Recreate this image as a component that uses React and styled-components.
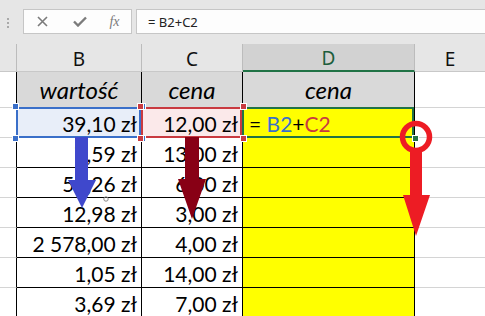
import React from 'react'
import styled, { createGlobalStyle } from 'styled-components'

const GlobalStyle = createGlobalStyle`
  html, body { margin: 0; padding: 0; background: #fff; }
  body { font-family: 'Lato', 'Noto Sans', sans-serif; }
`

const Window = styled.div`
  position: relative;
  width: 485px;
  height: 316px;
  overflow: hidden;
  background: #fff;
`

const Toolbar = styled.div`
  display: flex;
  align-items: flex-start;
  height: 44px;
  padding-top: 9px;
  box-sizing: border-box;
  background: #e6e6e6;
`

const Grip = styled.div`
  display: flex;
  flex-direction: column;
  gap: 2px;
  margin: 9px 14px 0 7px;
  span {
    width: 2px;
    height: 2px;
    background: #a9a9a9;
  }
`

const ButtonBox = styled.div`
  display: grid;
  grid-template-columns: 37px 37px 33px;
  align-items: center;
  justify-items: center;
  width: 109px;
  height: 25px;
  box-sizing: border-box;
  border: 1px solid #c6c6c6;
  background: #fdfdfd;
  color: #7b7b7b;
`

const Fx = styled.span`
  font-family: 'Liberation Serif', serif;
  font-style: italic;
  font-size: 14px;
  color: #7b7b7b;
`

const FormulaBox = styled.div`
  flex: 1;
  height: 25px;
  margin-left: 4px;
  padding-left: 11px;
  box-sizing: border-box;
  border: 1px solid #c6c6c6;
  border-right: none;
  background: #fdfdfd;
  display: flex;
  align-items: center;
  font-family: 'Noto Sans', sans-serif;
  font-size: 13px;
  color: #222;
`

const Sheet = styled.div`
  display: grid;
  grid-template-columns: 17px 125px 101px 172px 70px;
  grid-template-rows: 28px 36px repeat(7, 30px);
`

const ColHead = styled.div`
  display: flex;
  align-items: center;
  justify-content: center;
  box-sizing: border-box;
  background: ${p => (p.$active ? '#d2d2d2' : '#e6e6e6')};
  border-right: ${p => (p.$last ? 'none' : '1px solid #bcbcbc')};
  border-bottom: ${p => (p.$active ? '2px solid #217346' : '1px solid #c8c8c8')};
  font-family: 'Noto Sans', sans-serif;
  font-size: 19px;
  color: ${p => (p.$active ? '#1d5e3c' : '#111')};
  padding-top: 2px;
`

const RowHead = styled.div`
  box-sizing: border-box;
  border-right: 1px solid #000;
  border-bottom: 1px solid #d4d4d4;
`

const Cell = styled.div`
  position: relative;
  display: flex;
  align-items: center;
  justify-content: ${p => (p.$head ? 'center' : p.$left ? 'flex-start' : 'flex-end')};
  box-sizing: border-box;
  padding: ${p => (p.$head ? '0' : p.$left ? '2px 0 0 6px' : '2px 4px 0 0')};
  background: ${p => p.$bg || '#fff'};
  border-right: 1px solid #000;
  border-bottom: 1px solid #000;
  font-size: ${p => (p.$head ? '24px' : '21px')};
  font-style: ${p => (p.$head ? 'italic' : 'normal')};
  color: #000;
  white-space: nowrap;
`

const Blank = styled.div`
  box-sizing: border-box;
  border-bottom: 1px solid #d4d4d4;
`

const Sel = styled.div`
  position: absolute;
  top: -1px;
  left: -1px;
  right: 0;
  bottom: -1px;
  border: 2px solid ${p => p.$color};
  pointer-events: none;
`

const Handle = styled.div`
  position: absolute;
  width: 5px;
  height: 5px;
  background: ${p => p.$color};
  outline: 1px solid #fff;
  ${p => (p.$pos[0] === 't' ? 'top: -4px;' : 'bottom: -4px;')}
  ${p => (p.$pos[1] === 'l' ? 'left: -4px;' : 'right: -4px;')}
  z-index: 2;
`

const Ref = styled.span`
  color: ${p => p.$color};
`

const Overlay = styled.svg`
  position: absolute;
  top: 0;
  left: 0;
  pointer-events: none;
`

const rows = [
  ['39,10 zł', '12,00 zł'],
  ['7,59 zł', '13,00 zł'],
  ['54,26 zł', '6,00 zł'],
  ['12,98 zł', '3,00 zł'],
  ['2 578,00 zł', '4,00 zł'],
  ['1,05 zł', '14,00 zł'],
  ['3,69 zł', '7,00 zł'],
]

const corners = ['tl', 'tr', 'bl', 'br']

const App = () => {
  return (
    <Window>
      <GlobalStyle />

      <Toolbar>
        <Grip>
          <span />
          <span />
          <span />
        </Grip>
        <ButtonBox>
          <svg width="11" height="11" viewBox="0 0 11 11">
            <path d="M1 1 L10 10 M10 1 L1 10" stroke="#7b7b7b" strokeWidth="1.6" />
          </svg>
          <svg width="14" height="11" viewBox="0 0 14 11">
            <path d="M1 5.5 L5 9.5 L13 1.5" stroke="#7b7b7b" strokeWidth="2.4" fill="none" />
          </svg>
          <Fx>fx</Fx>
        </ButtonBox>
        <FormulaBox>= B2+C2</FormulaBox>
      </Toolbar>

      <Sheet>
        <ColHead />
        <ColHead>B</ColHead>
        <ColHead>C</ColHead>
        <ColHead $active>D</ColHead>
        <ColHead $last>E</ColHead>

        <RowHead />
        <Cell $head $bg="#d9d9d9">wartość</Cell>
        <Cell $head $bg="#d9d9d9">cena</Cell>
        <Cell $head $bg="#d9d9d9">cena</Cell>
        <Blank />

        {rows.map(([b, c], i) => (
          <React.Fragment key={i}>
            <RowHead />
            <Cell $bg={i === 0 ? '#e8eef9' : '#fff'}>
              {b}
              {i === 0 && (
                <>
                  <Sel $color="#3a6fc9" />
                  {corners.map(k => <Handle key={k} $pos={k} $color="#3a6fc9" />)}
                </>
              )}
            </Cell>
            <Cell $bg={i === 0 ? '#fbe9ea' : '#fff'}>
              {c}
              {i === 0 && (
                <>
                  <Sel $color="#c93a40" />
                  {corners.map(k => <Handle key={k} $pos={k} $color="#c93a40" />)}
                </>
              )}
            </Cell>
            <Cell $bg="#ffff00" $left>
              {i === 0 && (
                <>
                  =&nbsp;<Ref $color="#3a6fc9">B2</Ref>+<Ref $color="#c93a40">C2</Ref>
                  <Sel $color="#217346" />
                  <Handle $pos="br" $color="#217346" />
                </>
              )}
            </Cell>
            <Blank />
          </React.Fragment>
        ))}
      </Sheet>

      <Overlay width="485" height="316" viewBox="0 0 485 316">
        <polygon points="75,137 88,137 88,180 96,180 82,208 68,180 75,180" fill="#3f48cc" />
        <polygon points="185,137 199,137 199,179 206,179 192,219 178,179 185,179" fill="#880015" />
        <circle cx="106" cy="199" r="2.2" fill="none" stroke="#8a8a8a" strokeWidth="1" />
        <circle cx="416" cy="137" r="13.5" fill="none" stroke="#ed1c24" strokeWidth="5.5" />
        <polygon points="410,150 422,150 422,195 430,195 416,236 403,195 410,195" fill="#ed1c24" />
      </Overlay>
    </Window>
  )
}

export default App
